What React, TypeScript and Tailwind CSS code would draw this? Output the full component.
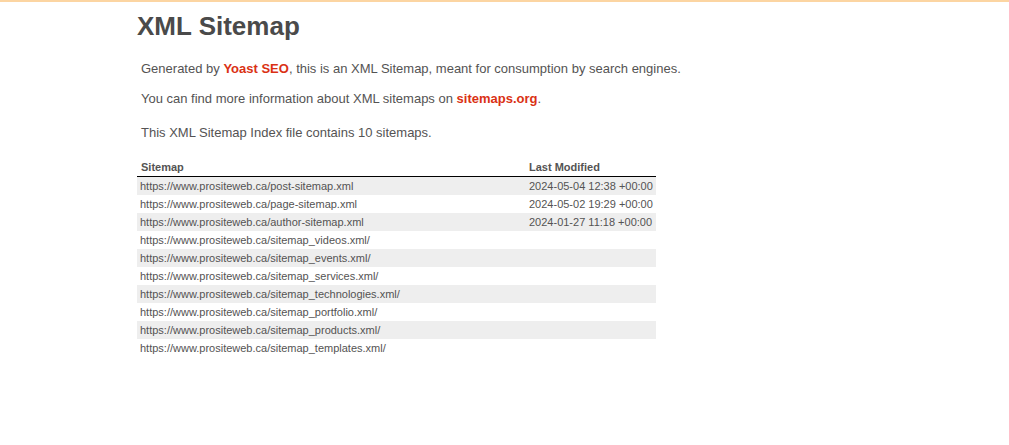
import React from 'react';

const rows: { url: string; mod?: string }[] = [
    { url: 'https://www.prositeweb.ca/post-sitemap.xml', mod: '2024-05-04 12:38 +00:00' },
    { url: 'https://www.prositeweb.ca/page-sitemap.xml', mod: '2024-05-02 19:29 +00:00' },
    { url: 'https://www.prositeweb.ca/author-sitemap.xml', mod: '2024-01-27 11:18 +00:00' },
    { url: 'https://www.prositeweb.ca/sitemap_videos.xml/' },
    { url: 'https://www.prositeweb.ca/sitemap_events.xml/' },
    { url: 'https://www.prositeweb.ca/sitemap_services.xml/' },
    { url: 'https://www.prositeweb.ca/sitemap_technologies.xml/' },
    { url: 'https://www.prositeweb.ca/sitemap_portfolio.xml/' },
    { url: 'https://www.prositeweb.ca/sitemap_products.xml/' },
    { url: 'https://www.prositeweb.ca/sitemap_templates.xml/' },
];

export default function App() {
    return (
        <div className="min-h-[445px] w-[1009px] bg-white border-t-2 border-[#fcd5a2] text-[#545353] font-['Liberation_Sans',Arial,sans-serif]">
            <div className="pl-[137px] pt-[9px]">
                <h1 className="text-[26px] font-bold leading-[30px] text-[#4a4a4a]">XML Sitemap</h1>

                {/* Intro text */}
                <div className="pl-1 text-[13px] leading-[16px]">
                    <p className="mt-[20px]">
                        Generated by <a className="font-bold text-[#da3114]">Yoast SEO</a>, this is an XML Sitemap, meant for consumption by search engines.
                    </p>
                    <p className="mt-[14px]">
                        You can find more information about XML sitemaps on <a className="font-bold text-[#da3114]">sitemaps.org</a>.
                    </p>
                    <p className="mt-[18px]">This XML Sitemap Index file contains 10 sitemaps.</p>
                </div>

                {/* Sitemap table */}
                <table className="mt-[19px] w-[519px] border-collapse text-[11px] whitespace-nowrap">
                    <thead>
                        <tr className="border-b border-black">
                            <th className="w-[389px] px-1 pb-[2px] text-left font-bold leading-[14px]">Sitemap</th>
                            <th className="px-[3px] pb-[2px] text-left font-bold leading-[14px]">Last Modified</th>
                        </tr>
                    </thead>
                    <tbody>
                        {rows.map((r, i) => (
                            <tr key={i} className={i % 2 === 0 ? 'bg-[#eeeeee]' : 'bg-white'}>
                                <td className="h-[18px] px-[3px] leading-[18px]">
                                    <a className="text-[#545353]">{r.url}</a>
                                </td>
                                <td className="h-[18px] px-[3px] leading-[18px]">{r.mod ?? ''}</td>
                            </tr>
                        ))}
                    </tbody>
                </table>
            </div>
        </div>
    );
}
